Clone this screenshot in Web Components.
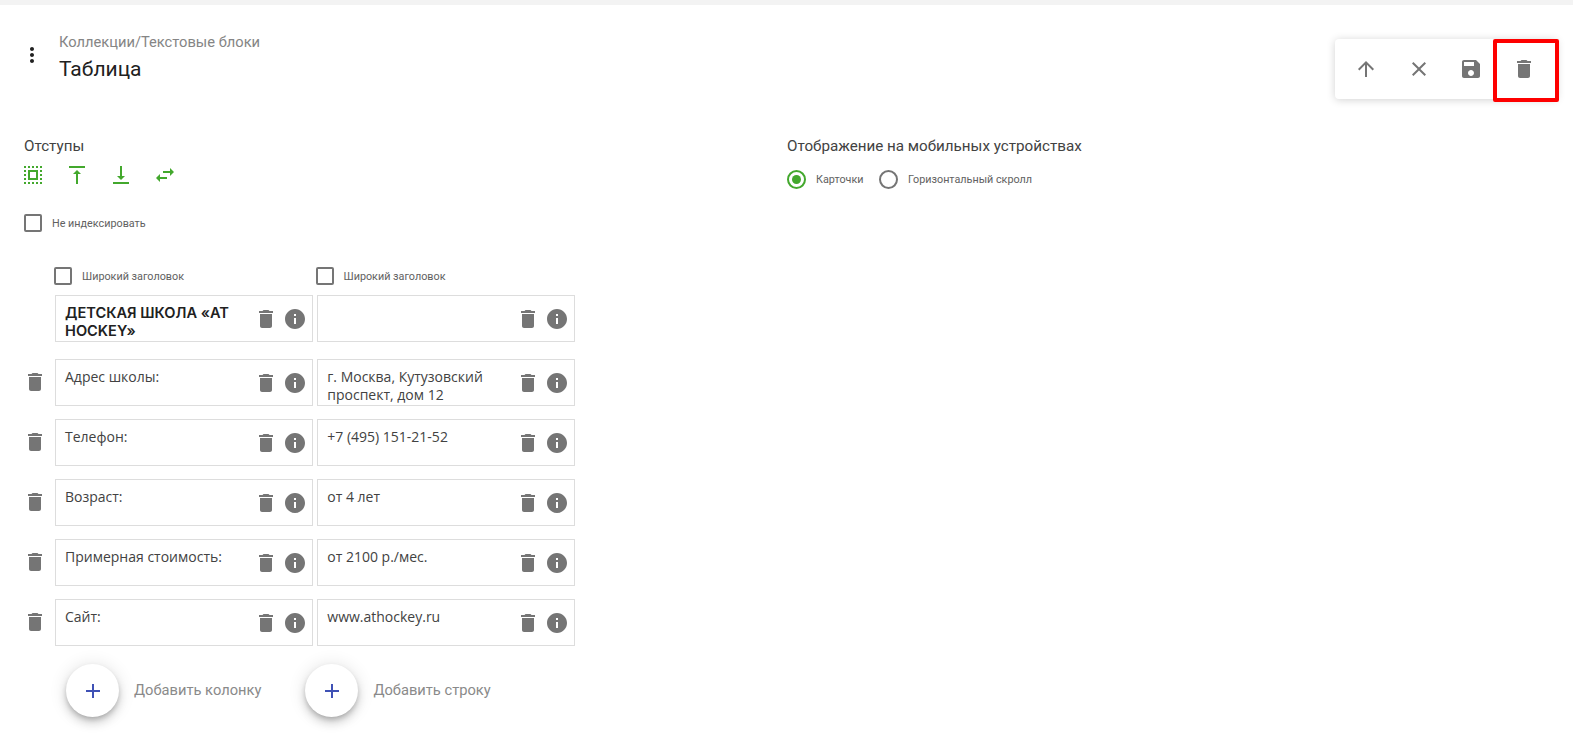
<!DOCTYPE html>
<html lang="ru">
<head>
<meta charset="utf-8">
<title>Таблица</title>
<style>
  html, body { margin: 0; padding: 0; background: #fff; }
  body { font-family: Roboto, "Liberation Sans", sans-serif; color: #212121; height: 742px; overflow: hidden; }
</style>
</head>
<body>
<block-editor></block-editor>
<script>
// material icon paths
const ICONS = {
    trash: '<path d="M6 19c0 1.1.9 2 2 2h8c1.1 0 2-.9 2-2V7H6v12zM19 4h-3.5l-1-1h-5l-1 1H5v2h14V4z"/>',
    info: '<path d="M12 2C6.48 2 2 6.48 2 12s4.48 10 10 10 10-4.48 10-10S17.52 2 12 2zm1 15h-2v-6h2v6zm0-8h-2V7h2v2z"/>',
    save: '<path d="M17 3H5c-1.11 0-2 .9-2 2v14c0 1.1.89 2 2 2h14c1.1 0 2-.9 2-2V7l-4-4zm-5 16c-1.66 0-3-1.34-3-3s1.34-3 3-3 3 1.34 3 3-1.34 3-3 3zm3-10H5V5h10v4z"/>',
    close: '<path d="M19 6.41L17.59 5 12 10.59 6.41 5 5 6.41 10.59 12 5 17.59 6.41 19 12 13.41 17.59 19 19 17.59 13.41 12z"/>',
    up: '<path d="M4 12l1.41 1.41L11 7.83V20h2V7.83l5.58 5.59L20 12l-8-8-8 8z"/>',
    more: '<path d="M12 8c1.1 0 2-.9 2-2s-.9-2-2-2-2 .9-2 2 .9 2 2 2zm0 2c-1.1 0-2 .9-2 2s.9 2 2 2 2-.9 2-2-.9-2-2-2zm0 6c-1.1 0-2 .9-2 2s.9 2 2 2 2-.9 2-2-.9-2-2-2z"/>',
    add: '<path d="M19 13h-6v6h-2v-6H5v-2h6V5h2v6h6v2z"/>',
    padding: '<path d="M7 7h10v10H7zM9 9v6h6V9z" fill-rule="evenodd"/><path d="M3 3h2v2H3zM7 3h2v2H7zM11 3h2v2h-2zM15 3h2v2h-2zM19 3h2v2h-2zM3 7h2v2H3zM19 7h2v2h-2zM3 11h2v2H3zM19 11h2v2h-2zM3 15h2v2H3zM19 15h2v2h-2zM3 19h2v2H3zM7 19h2v2H7zM11 19h2v2h-2zM15 19h2v2h-2zM19 19h2v2h-2z"/>',
    top: '<path d="M8 11h3v10h2V11h3l-4-4-4 4zM4 3v2h16V3H4z"/>',
    bottom: '<path d="M16 13h-3V3h-2v10H8l4 4 4-4zM4 19v2h16v-2H4z"/>',
    swap: '<path d="M6.99 11L3 15l3.99 4v-3H14v-2H6.99v-3zM21 9l-3.99-4v3H10v2h7.01v3L21 9z"/>'
};

class UiIcon extends HTMLElement {
    connectedCallback() {
        if (this.shadowRoot) return;
        this.attachShadow({ mode: 'open' });
        const size = this.getAttribute('size') || 24;
        this.shadowRoot.innerHTML = `
            <style>
                :host { display: inline-flex; width: ${size}px; height: ${size}px; flex: none; }
                svg { width: 100%; height: 100%; fill: currentColor; display: block; }
            </style>
            <svg viewBox="0 0 24 24">${ICONS[this.getAttribute('name')] || ''}</svg>
        `;
    }
}

class UiCheckbox extends HTMLElement {
    constructor() {
        super();
        this.attachShadow({ mode: 'open' });
        this.shadowRoot.innerHTML = `
            <style>
                :host { display: flex; align-items: center; height: 18px; }
                .box { width: 14px; height: 14px; border: 2px solid #757575; border-radius: 2px; flex: none; }
                .label { margin-left: 10px; font-size: 10.8px; color: #616161; white-space: nowrap; }
            </style>
            <div class="box"></div>
            <div class="label"><slot></slot></div>
        `;
    }
}

class UiRadio extends HTMLElement {
    constructor() {
        super();
        this.attachShadow({ mode: 'open' });
        this.shadowRoot.innerHTML = `
            <style>
                :host { display: flex; align-items: center; height: 20px; }
                .ring { width: 15px; height: 15px; border: 2px solid #757575; border-radius: 50%; flex: none; display: flex; align-items: center; justify-content: center; }
                :host([checked]) .ring { border-color: #43a82d; }
                :host([checked]) .dot { width: 9px; height: 9px; border-radius: 50%; background: #43a82d; }
                .label { margin-left: 10px; font-size: 10.8px; color: #616161; white-space: nowrap; }
            </style>
            <div class="ring"><div class="dot"></div></div>
            <div class="label"><slot></slot></div>
        `;
    }
}

class TableCell extends HTMLElement {
    constructor() {
        super();
        this.attachShadow({ mode: 'open' });
        this.shadowRoot.innerHTML = `
            <style>
                :host { display: flex; box-sizing: border-box; width: 257.7px; height: 47px; border: 1px solid #ddd; overflow: hidden; color: #424242; }
                .text { flex: 1; min-width: 0; padding: 8px 0 0 9px; font-family: "Open Sans", Roboto, sans-serif; font-size: 14px; line-height: 18px; }
                :host([bold]) .text { font-family: Inter, Roboto, sans-serif; font-weight: 600; font-size: 14.6px; color: #212121; }
                .tools { display: flex; align-items: center; gap: 5px; padding-right: 5px; color: #757575; flex: none; margin-left: 4px; }
            </style>
            <div class="text"><slot></slot></div>
            <div class="tools"><ui-icon name="trash"></ui-icon><ui-icon name="info"></ui-icon></div>
        `;
    }
}

class TableRow extends HTMLElement {
    constructor() {
        super();
        this.attachShadow({ mode: 'open' });
        this.shadowRoot.innerHTML = `
            <style>
                :host { display: flex; align-items: center; gap: 4.6px; padding-left: 55px; margin-top: 13px; color: #757575; position: relative; }
                .del { position: absolute; left: 22.5px; top: 11px; }
                :host([head]) { margin-top: 0; }
                :host([head]) .del { display: none; }
            </style>
            <ui-icon class="del" name="trash"></ui-icon>
            <slot></slot>
        `;
    }
}

class AddButton extends HTMLElement {
    constructor() {
        super();
        this.attachShadow({ mode: 'open' });
        this.shadowRoot.innerHTML = `
            <style>
                :host { display: flex; align-items: center; gap: 15px; }
                .fab { width: 53px; height: 53px; border-radius: 50%; background: #fff; color: #3f51b5; flex: none;
                       display: flex; align-items: center; justify-content: center;
                       box-shadow: 0 3px 5px -1px rgba(0,0,0,.2), 0 6px 10px 0 rgba(0,0,0,.14), 0 1px 18px 0 rgba(0,0,0,.12); }
                .label { font-size: 14.7px; color: #8a8a8a; white-space: nowrap; padding-bottom: 1px; }
            </style>
            <div class="fab"><ui-icon name="add"></ui-icon></div>
            <div class="label"><slot></slot></div>
        `;
    }
}

class BlockToolbar extends HTMLElement {
    constructor() {
        super();
        this.attachShadow({ mode: 'open' });
        this.shadowRoot.innerHTML = `
            <style>
                :host { position: absolute; left: 1335px; top: 34px; width: 222px; height: 60px; background: #fff; border-radius: 4px;
                        box-shadow: 0 1px 8px rgba(0,0,0,.18); display: flex; align-items: center; padding-left: 19px; box-sizing: border-box; color: #757575; gap: 28.5px; }
                .mark { position: absolute; left: 158px; top: 0; width: 65.5px; height: 63px; box-sizing: border-box; border: 4px solid #fe0000; border-radius: 2px; }
            </style>
            <ui-icon name="up"></ui-icon>
            <ui-icon name="close"></ui-icon>
            <ui-icon name="save"></ui-icon>
            <ui-icon name="trash"></ui-icon>
            <div class="mark"></div>
        `;
    }
}

class BlockEditor extends HTMLElement {
    constructor() {
        super();
        this.attachShadow({ mode: 'open' });
        const rows = [
            ['Адрес школы:', 'г. Москва, Кутузовский проспект, дом 12'],
            ['Телефон:', '+7 (495) 151-21-52'],
            ['Возраст:', 'от 4 лет'],
            ['Примерная стоимость:', 'от 2100 р./мес.'],
            ['Сайт:', 'www.athockey.ru']
        ];
        this.shadowRoot.innerHTML = `
            <style>
                :host { display: block; position: relative; height: 742px; border-top: 5px solid #f3f3f3; box-sizing: border-box; }
                .head { display: flex; padding: 28px 0 0 20px; height: 70px; box-sizing: border-box; }
                .head ui-icon { color: #212121; margin-top: 10px; }
                .crumbs { margin-left: 15px; }
                .path { font-size: 14.7px; line-height: 18px; color: #858585; }
                .title { font-size: 21px; line-height: 24px; color: #212121; margin-top: 6px; }
                .columns { display: grid; grid-template-columns: 763px 1fr; padding: 61px 0 0 24px; }
                .caption { font-size: 15.2px; line-height: 20px; color: #424242; }
                .pads { display: flex; gap: 20px; margin: 7px 0 0 -3px; color: #43a82d; }
                .noindex { margin-top: 27px; }
                .radios { display: flex; gap: 15.5px; margin-top: 13px; }
                .table { margin: 35px 0 0 -24px; }
                .wide { display: flex; padding-left: 54px; }
                .wide ui-checkbox { width: 261.5px; margin-bottom: 10px; }
                .first { margin-bottom: 17px; }
                .actions { display: flex; gap: 44px; padding: 18px 0 0 66px; }
            </style>
            <div class="head">
                <ui-icon name="more"></ui-icon>
                <div class="crumbs">
                    <div class="path">Коллекции/Текстовые блоки</div>
                    <div class="title">Таблица</div>
                </div>
            </div>
            <block-toolbar></block-toolbar>
            <div class="columns">
                <div>
                    <div class="caption">Отступы</div>
                    <div class="pads">
                        <ui-icon name="padding"></ui-icon>
                        <ui-icon name="top"></ui-icon>
                        <ui-icon name="bottom"></ui-icon>
                        <ui-icon name="swap"></ui-icon>
                    </div>
                    <ui-checkbox class="noindex">Не индексировать</ui-checkbox>
                    <div class="table">
                        <div class="wide">
                            <ui-checkbox>Широкий заголовок</ui-checkbox>
                            <ui-checkbox>Широкий заголовок</ui-checkbox>
                        </div>
                        <table-row head class="first">
                            <table-cell bold>ДЕТСКАЯ ШКОЛА «AT HOCKEY»</table-cell>
                            <table-cell></table-cell>
                        </table-row>
                        ${rows.map(r => `
                        <table-row>
                            <table-cell>${r[0]}</table-cell>
                            <table-cell>${r[1]}</table-cell>
                        </table-row>`).join('')}
                        <div class="actions">
                            <add-button>Добавить колонку</add-button>
                            <add-button>Добавить строку</add-button>
                        </div>
                    </div>
                </div>
                <div>
                    <div class="caption">Отображение на мобильных устройствах</div>
                    <div class="radios">
                        <ui-radio checked>Карточки</ui-radio>
                        <ui-radio>Горизонтальный скролл</ui-radio>
                    </div>
                </div>
            </div>
        `;
    }
}

// children first, so upgrades run in order
customElements.define('ui-icon', UiIcon);
customElements.define('ui-checkbox', UiCheckbox);
customElements.define('ui-radio', UiRadio);
customElements.define('table-cell', TableCell);
customElements.define('table-row', TableRow);
customElements.define('add-button', AddButton);
customElements.define('block-toolbar', BlockToolbar);
customElements.define('block-editor', BlockEditor);
</script>
</body>
</html>
